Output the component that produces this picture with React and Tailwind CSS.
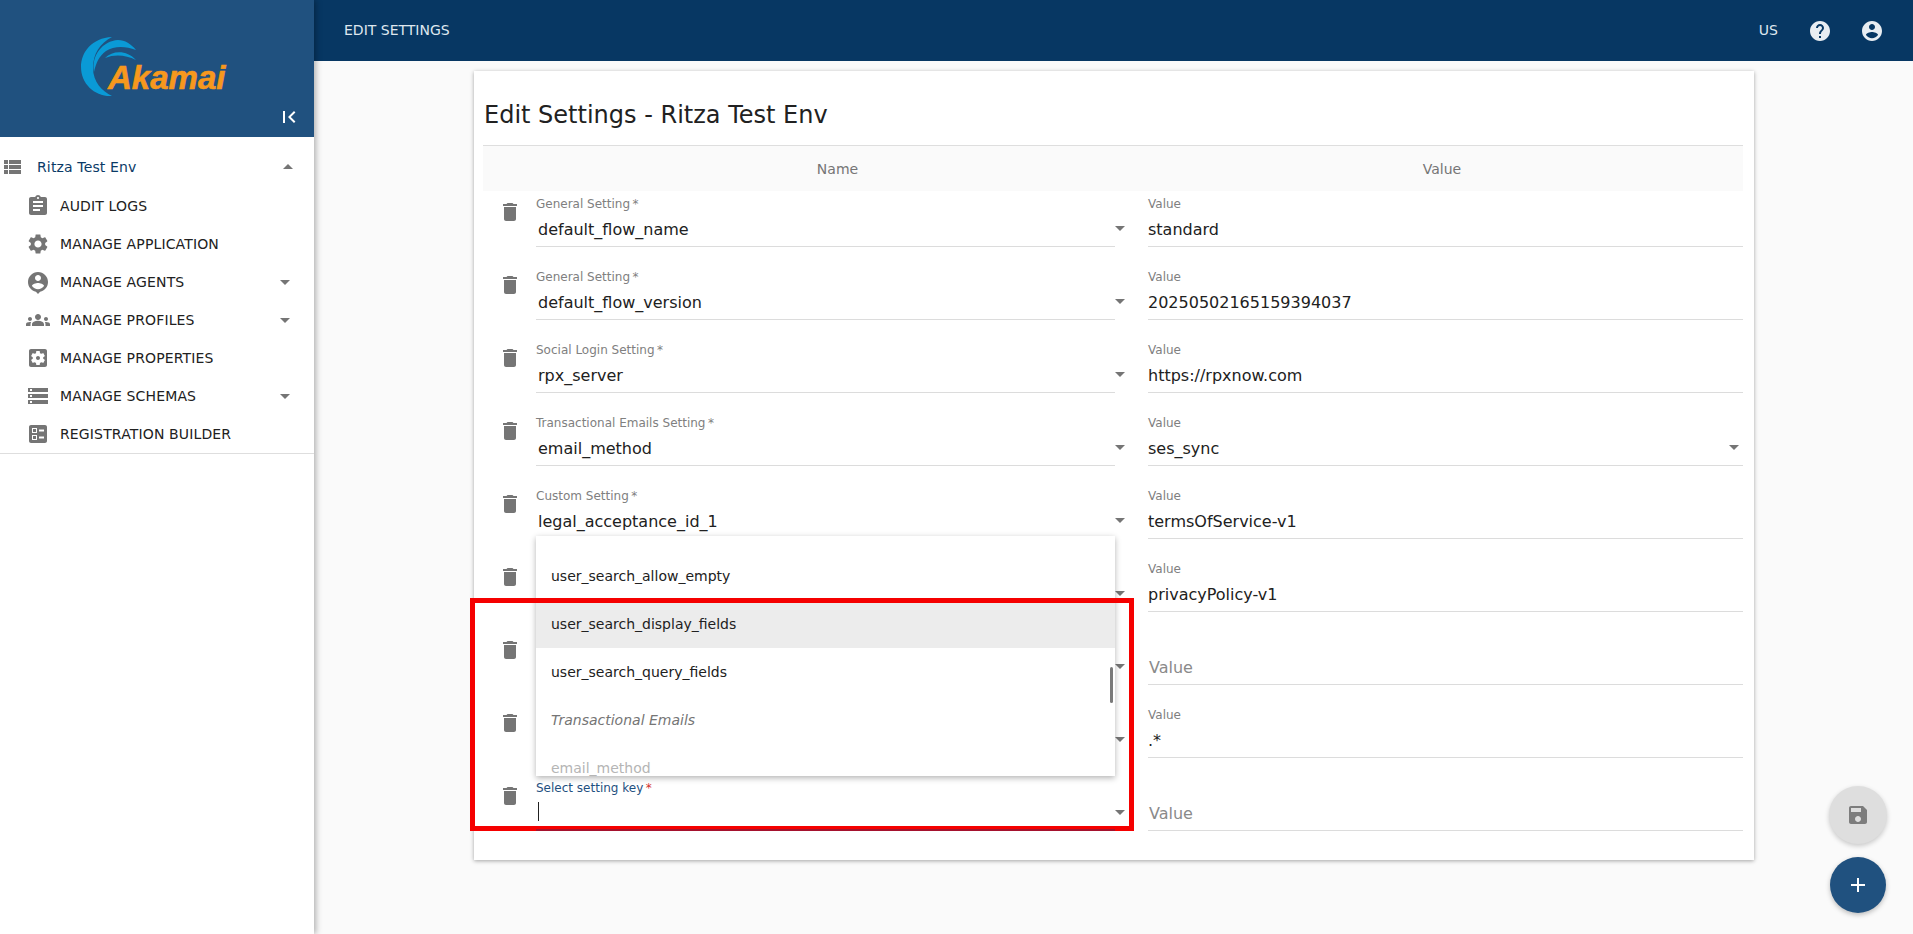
import clsx from "clsx";

const P = {
  del: "M6 19c0 1.1.9 2 2 2h8c1.1 0 2-.9 2-2V7H6v12zM19 4h-3.5l-1-1h-5l-1 1H5v2h14V4z",
  help: "M12 2C6.48 2 2 6.48 2 12s4.48 10 10 10 10-4.48 10-10S17.52 2 12 2zm1 17h-2v-2h2v2zm2.07-7.75l-.9.92C13.45 12.9 13 13.5 13 15h-2v-.5c0-1.1.45-2.1 1.17-2.83l1.24-1.26c.37-.36.59-.86.59-1.41 0-1.1-.9-2-2-2s-2 .9-2 2H8c0-2.21 1.79-4 4-4s4 1.79 4 4c0 .88-.36 1.68-.93 2.25z",
  account: "M12 2C6.48 2 2 6.48 2 12s4.48 10 10 10 10-4.48 10-10S17.52 2 12 2zm0 3c1.66 0 3 1.34 3 3s-1.34 3-3 3-3-1.34-3-3 1.34-3 3-3zm0 14.2c-2.5 0-4.71-1.28-6-3.22.03-1.99 4-3.08 6-3.08 1.99 0 5.97 1.09 6 3.08-1.29 1.94-3.5 3.22-6 3.22z",
  assignment: "M19 3h-4.18C14.4 1.84 13.3 1 12 1c-1.3 0-2.4.84-2.82 2H5c-1.1 0-2 .9-2 2v14c0 1.1.9 2 2 2h14c1.1 0 2-.9 2-2V5c0-1.1-.9-2-2-2zm-7 0c.55 0 1 .45 1 1s-.45 1-1 1-1-.45-1-1 .45-1 1-1zm2 14H7v-2h7v2zm3-4H7v-2h10v2zm0-4H7V7h10v2z",
  settings: "M19.14 12.94c.04-.3.06-.61.06-.94 0-.32-.02-.64-.07-.94l2.03-1.58c.18-.14.23-.41.12-.61l-1.92-3.32c-.12-.22-.37-.29-.59-.22l-2.39.96c-.5-.38-1.03-.7-1.62-.94l-.36-2.54c-.04-.24-.24-.41-.48-.41h-3.84c-.24 0-.43.17-.47.41l-.36 2.54c-.59.24-1.13.57-1.62.94l-2.39-.96c-.22-.08-.47 0-.59.22L2.74 8.87c-.12.21-.08.47.12.61l2.03 1.58c-.05.3-.09.63-.09.94s.02.64.07.94l-2.03 1.58c-.18.14-.23.41-.12.61l1.92 3.32c.12.22.37.29.59.22l2.39-.96c.5.38 1.03.7 1.62.94l.36 2.54c.05.24.24.41.48.41h3.84c.24 0 .44-.17.47-.41l.36-2.54c.59-.24 1.13-.56 1.62-.94l2.39.96c.22.08.47 0 .59-.22l1.92-3.32c.12-.22.07-.47-.12-.61l-2.01-1.58zM12 15.6c-1.98 0-3.6-1.62-3.6-3.6s1.62-3.6 3.6-3.6 3.6 1.62 3.6 3.6-1.62 3.6-3.6 3.6z",
  agent: "M12 2C6.48 2 2 6.48 2 12c0 4.8 3.4 8.8 7.9 9.8L12 24l2.1-2.2c4.5-1 7.9-5 7.9-9.8 0-5.52-4.48-10-10-10zm0 3c1.66 0 3 1.34 3 3s-1.34 3-3 3-3-1.34-3-3 1.34-3 3-3zm0 14.2c-2.5 0-4.71-1.28-6-3.22.03-1.99 4-3.08 6-3.08 1.99 0 5.97 1.09 6 3.08-1.29 1.94-3.5 3.22-6 3.22z",
  groups: "M12 12.75c1.63 0 3.07.39 4.24.9 1.08.48 1.76 1.56 1.76 2.73V18H6v-1.61c0-1.18.68-2.26 1.76-2.73 1.17-.52 2.61-.91 4.24-.91zM4 13c1.1 0 2-.9 2-2s-.9-2-2-2-2 .9-2 2 .9 2 2 2zm1.13 1.1c-.37-.06-.74-.1-1.13-.1-.99 0-1.93.21-2.78.58C.48 14.9 0 15.62 0 16.43V18h4.5v-1.61c0-.83.23-1.61.63-2.29zM20 13c1.1 0 2-.9 2-2s-.9-2-2-2-2 .9-2 2 .9 2 2 2zm4 3.43c0-.81-.48-1.53-1.22-1.85-.85-.37-1.79-.58-2.78-.58-.39 0-.76.04-1.13.1.4.68.63 1.46.63 2.29V18H24v-1.57zM12 6c1.66 0 3 1.34 3 3s-1.34 3-3 3-3-1.34-3-3 1.34-3 3-3z",
  properties: "M12 10c-1.1 0-2 .9-2 2s.9 2 2 2 2-.9 2-2-.9-2-2-2zm7-7H5c-1.11 0-2 .9-2 2v14c0 1.1.89 2 2 2h14c1.11 0 2-.9 2-2V5c0-1.1-.89-2-2-2zm-1.75 9c0 .23-.02.46-.05.68l1.48 1.16c.13.11.17.3.08.45l-1.4 2.42c-.09.15-.27.21-.43.15l-1.74-.7c-.36.28-.76.51-1.18.69l-.26 1.85c-.03.17-.18.3-.35.3h-2.8c-.17 0-.32-.13-.35-.29l-.26-1.85c-.43-.18-.82-.41-1.18-.69l-1.74.7c-.16.06-.34 0-.43-.15l-1.4-2.42c-.09-.15-.05-.34.08-.45l1.48-1.16c-.03-.23-.05-.46-.05-.69 0-.23.02-.46.05-.68l-1.48-1.16c-.13-.11-.17-.3-.08-.45l1.4-2.42c.09-.15.27-.21.43-.15l1.74.7c.36-.28.76-.51 1.18-.69l.26-1.85c.03-.17.18-.3.35-.3h2.8c.17 0 .32.13.35.29l.26 1.85c.43.18.82.41 1.18.69l1.74-.7c.16-.06.34 0 .43.15l1.4 2.42c.09.15.05.34-.08.45l-1.48 1.16c.03.23.05.46.05.69z",
  storage: "M2 20h20v-4H2v4zm2-3h2v2H4v-2zM2 4v4h20V4H2zm4 3H4V5h2v2zm-4 7h20v-4H2v4zm2-3h2v2H4v-2z",
  ballot: "M13 9.5h5v-2h-5v2zm0 7h5v-2h-5v2zm6 4.5H5c-1.1 0-2-.9-2-2V5c0-1.1.9-2 2-2h14c1.1 0 2 .9 2 2v14c0 1.1-.9 2-2 2zM6 11h5V6H6v5zm1-4h3v3H7V7zM6 18h5v-5H6v5zm1-4h3v3H7v-3z",
  list: "M4 14h4v-4H4v4zm0 5h4v-4H4v4zM4 9h4V5H4v4zm5 5h12v-4H9v4zm0 5h12v-4H9v4zM9 5v4h12V5H9z",
  save: "M17 3H5c-1.11 0-2 .9-2 2v14c0 1.1.89 2 2 2h14c1.1 0 2-.9 2-2V7l-4-4zm-5 16c-1.66 0-3-1.34-3-3s1.34-3 3-3 3 1.34 3 3-1.34 3-3 3zm3-10H5V5h10v4z",
  first: "M18.41 16.59L13.82 12l4.59-4.59L17 6l-6 6 6 6zM6 6h2v12H6z",
  add: "M19 13h-6v6h-2v-6H5v-2h6V5h2v6h6v2z",
  down: "M7 10l5 5 5-5z",
  up: "M7 14l5-5 5 5z",
};

function Icon({ d, className }) {
  return (
    <svg viewBox="0 0 24 24" fill="currentColor" className={clsx("shrink-0", className)} aria-hidden="true">
      <path d={d} />
    </svg>
  );
}

const NAV = [
  { label: "AUDIT LOGS", icon: P.assignment },
  { label: "MANAGE APPLICATION", icon: P.settings },
  { label: "MANAGE AGENTS", icon: P.agent, caret: true },
  { label: "MANAGE PROFILES", icon: P.groups, caret: true },
  { label: "MANAGE PROPERTIES", icon: P.properties },
  { label: "MANAGE SCHEMAS", icon: P.storage, caret: true },
  { label: "REGISTRATION BUILDER", icon: P.ballot },
];

const ROWS = [
  { label: "General Setting", name: "default_flow_name", value: "standard" },
  { label: "General Setting", name: "default_flow_version", value: "20250502165159394037" },
  { label: "Social Login Setting", name: "rpx_server", value: "https://rpxnow.com" },
  { label: "Transactional Emails Setting", name: "email_method", value: "ses_sync", valueCaret: true },
  { label: "Custom Setting", name: "legal_acceptance_id_1", value: "termsOfService-v1" },
  { value: "privacyPolicy-v1" },
  {},
  { value: ".*" },
  { label: "Select setting key", focused: true },
];

function Logo() {
  return (
    <div className="relative ml-[78px] mt-[33px] h-[70px] w-[160px]">
      <svg viewBox="78 33 80 70" className="absolute left-0 top-0 h-[70px] w-[80px]" fill="#0a9ad6" aria-hidden="true">
        <path d="M112 37C92 38 81 52 81 67C81 84 95 97 112 96C102 91 93 82 93 68C93 54 100 43 112 37Z" />
        <path d="M94 72C91 55 103 41 118 40C125 40 131 44 136 50C125 46 114 46 106 51C99 56 96 63 94 72Z" />
        <path d="M105 58C113 50 127 50 136 60C126 55 115 54 105 58Z" />
      </svg>
      <span className="absolute left-[30px] top-[26px] text-[33px] leading-[38px] font-bold italic text-[#f7981d] [-webkit-text-stroke:0.6px_#f7981d] [font-family:'Liberation_Sans',sans-serif]">
        Akamai
      </span>
    </div>
  );
}

function Sidebar() {
  return (
    <aside className="relative z-10 flex w-[314px] shrink-0 flex-col bg-white shadow-[2px_0_6px_rgba(0,0,0,0.3)]">
      <div className="relative h-[137px] bg-[#20517f]">
        <Logo />
        <Icon d={P.first} className="absolute left-[277px] top-[105px] h-6 w-6 text-white" />
      </div>
      <nav className="border-b border-[#dedede] tracking-[0.14px]">
        <div className="flex h-[50px] items-center pt-[10px]">
          <Icon d={P.list} className="h-6 w-6 text-[#757575]" />
          <span className="ml-[13px] flex-1 text-[14px] text-[#0a3a66]">Ritza Test Env</span>
          <Icon d={P.up} className="mr-[14px] h-6 w-6 text-[#757575]" />
        </div>
        {NAV.map((n) => (
          <div key={n.label} className="flex h-[38px] items-center">
            <Icon d={n.icon} className="ml-[26px] h-6 w-6 text-[#757575]" />
            <span className="ml-[10px] flex-1 text-[14px] text-[#212121]">{n.label}</span>
            {n.caret && <Icon d={P.down} className="mr-[17px] h-6 w-6 text-[#757575]" />}
          </div>
        ))}
      </nav>
    </aside>
  );
}

function Header() {
  return (
    <header className="flex h-[61px] shrink-0 items-center bg-[#073763] pl-[30px] pr-[29px] text-[14px] text-[#dfe7ef]">
      <span className="flex-1">EDIT SETTINGS</span>
      <span>US</span>
      <Icon d={P.help} className="ml-[30px] h-6 w-6 text-[#e8edf2]" />
      <Icon d={P.account} className="ml-[28px] h-6 w-6 text-[#e8edf2]" />
    </header>
  );
}

function Row({ row }) {
  const { label, name, value, valueCaret, focused } = row;
  return (
    <div className="flex h-[73px] shrink-0">
      <div className="w-[53px] shrink-0 pl-[15px] pt-[9px]">
        <Icon d={P.del} className="h-6 w-6 text-[#757575]" />
      </div>
      <div
        className={clsx(
          "relative h-14 w-[579px] shrink-0",
          // the focus line shows through the red annotation in the picture
          focused ? "z-30 border-b-2 border-[#a5122e]" : "border-b border-[#dcdcdc]",
        )}
      >
        {label && (
          <div className={clsx("mt-[6px] text-[12px] leading-[14px]", focused ? "text-[#1f5080]" : "text-[#808080]")}>
            {label}
            <span className={focused ? "text-[#d32f2f]" : ""}>{"\u2009*"}</span>
          </div>
        )}
        {name && <div className="ml-[2px] mt-[7px] text-[16px] leading-6 text-[#212121]">{name}</div>}
        {focused && <div className="ml-[2px] mt-[7px] h-[19px] w-px bg-[#212121]" />}
        <Icon d={P.down} className="absolute right-[-17px] top-[25px] h-6 w-6 text-[#757575]" />
      </div>
      <div className="relative ml-[33px] h-14 w-[595px] shrink-0 border-b border-[#dcdcdc]">
        {value ? (
          <>
            <div className="mt-[6px] text-[12px] leading-[14px] text-[#808080]">Value</div>
            <div className="mt-[7px] text-[16px] leading-6 text-[#212121]">{value}</div>
          </>
        ) : (
          <div className="ml-[1px] mt-[27px] text-[16px] leading-6 text-[#8a8a8a]">Value</div>
        )}
        {valueCaret && <Icon d={P.down} className="absolute right-[-3px] top-[25px] h-6 w-6 text-[#757575]" />}
      </div>
    </div>
  );
}

function Dropdown() {
  return (
    <div className="absolute left-[53px] top-[345px] z-10 h-[240px] w-[579px] overflow-hidden bg-white pt-4 text-[14px] shadow-[0_2px_6px_rgba(0,0,0,0.3)]">
      <div className="flex h-12 items-center pl-[15px] text-[#212121]">user_search_allow_empty</div>
      <div className="flex h-12 items-center bg-[#ececec] pl-[15px] text-[#212121]">user_search_display_fields</div>
      <div className="flex h-12 items-center pl-[15px] text-[#212121]">user_search_query_fields</div>
      <div className="flex h-12 items-center pl-[15px] italic text-[#757575]">Transactional Emails</div>
      <div className="flex h-12 items-center pl-[15px] text-[#b5b5b5]">email_method</div>
      <div className="absolute left-[574px] top-[131px] h-[36px] w-[3px] rounded-sm bg-[#7a7a7a]" />
    </div>
  );
}

function Card() {
  return (
    <section className="ml-[160px] mt-[10px] flex h-[789px] w-[1280px] flex-col bg-white pl-[9px] shadow-[0_1px_4px_rgba(0,0,0,0.35)]">
      <h1 className="flex h-[74px] shrink-0 items-center pl-[1px] pt-[13px] text-[24px] font-normal text-[#212121]">
        Edit Settings - Ritza Test Env
      </h1>
      <div className="flex h-[46px] w-[1260px] shrink-0 border-t border-[#dedede] bg-[#fafafa] pt-[2px] text-[14px] text-[#757575]">
        <div className="w-[53px]" />
        <div className="flex w-[603px] items-center justify-center">Name</div>
        <div className="flex flex-1 items-center justify-center pl-[2px]">Value</div>
      </div>
      <div className="relative">
        {ROWS.map((r, i) => (
          <Row key={i} row={r} />
        ))}
        <Dropdown />
      </div>
    </section>
  );
}

export default function App() {
  return (
    <div className="relative flex h-[934px] w-[1913px] overflow-hidden bg-[#fafafa] [font-family:'DejaVu_Sans',sans-serif]">
      <Sidebar />
      <main className="flex flex-1 flex-col">
        <Header />
        <Card />
      </main>

      {/* annotation drawn over the screenshot */}
      <div className="absolute left-[470px] top-[598px] z-20 h-[233px] w-[664px] border-[5px] border-[#f50000]" />

      <button className="absolute left-[1829px] top-[786px] z-20 flex h-[58px] w-[58px] items-center justify-center rounded-full bg-[#dedede] shadow-[0_2px_5px_rgba(0,0,0,0.2)]">
        <Icon d={P.save} className="h-6 w-6 text-[#7d7d7d]" />
      </button>
      <button className="absolute left-[1830px] top-[857px] z-20 flex h-14 w-14 items-center justify-center rounded-full bg-[#20517f] shadow-[0_2px_5px_rgba(0,0,0,0.25)]">
        <Icon d={P.add} className="h-6 w-6 text-white" />
      </button>
    </div>
  );
}
